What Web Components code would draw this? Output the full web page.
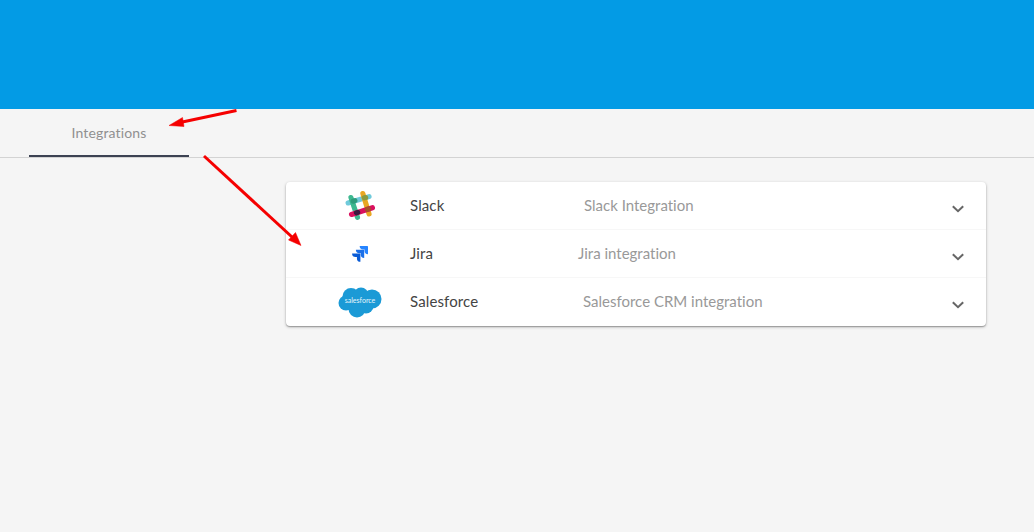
<!DOCTYPE html>
<html>
<head>
<meta charset="utf-8">
<title>Integrations</title>
<style>
    html,body{margin:0;height:100%;}
    body{background:#f5f5f5;font-family:"Lato","Noto Sans",sans-serif;font-variant-ligatures:none;overflow:hidden;position:relative;}
</style>
</head>
<body>
<app-header></app-header>
<tab-bar label="Integrations"></tab-bar>
<integration-list>
    <integration-row name="Slack" desc="Slack Integration" offset="6">
        <svg slot="logo" width="34" height="34" viewBox="0 0 30 30" fill="none" stroke-linecap="round" stroke-width="4.500">
            <path d="M4.500 12.300 23 6.700" stroke="#70cadb"/>
            <path d="M7 7.500 12.800 25" stroke="#3eb890"/>
            <path d="M17.500 4 23 22" stroke="#e8a723"/>
            <path d="M7.500 22.500 26 16.500" stroke="#d9115f"/>
            <path d="M9 10.800 10.500 10.300" stroke="#2f9c7b"/>
            <path d="M18.800 7.800 20 7.500" stroke="#8b9a3f"/>
            <path d="M11.800 21 13 20.600" stroke="#3b1a3f"/>
            <path d="M21.500 17.900 22.500 17.600" stroke="#a5502a"/>
        </svg>
    </integration-row>
    <integration-row name="Jira" desc="Jira integration" offset="0">
        <svg slot="logo" width="16" height="16" viewBox="0 0 24 24">
            <path id="j" d="M23 0H11.500a5.200 5.200 0 0 0 5.200 5.200h2.100v2a5.200 5.200 0 0 0 5.200 5.200V1a1 1 0 0 0-1-1z" fill="#2684ff"/>
            <path d="M17.300 5.700H5.800a5.200 5.200 0 0 0 5.200 5.200h2.100v2a5.200 5.200 0 0 0 5.200 5.200V6.700a1 1 0 0 0-1-1z" fill="#1b6fe8"/>
            <path d="M11.600 11.400H.1a5.200 5.200 0 0 0 5.200 5.200h2.100v2a5.200 5.200 0 0 0 5.200 5.200V12.400a1 1 0 0 0-1-1z" fill="#0a5cd6"/>
        </svg>
    </integration-row>
    <integration-row name="Salesforce" desc="Salesforce CRM integration" offset="5">
        <sf-logo slot="logo"></sf-logo>
    </integration-row>
</integration-list>
<red-arrows></red-arrows>

<script>
class AppHeader extends HTMLElement{
    constructor(){
        super()
        this.attachShadow({mode: 'open'})
        this.shadowRoot.innerHTML = `
            <style>
                :host{display:block;height:109px;background:#039be5;}
            </style>
        `
    }
}

class TabBar extends HTMLElement{
    constructor(){
        super()
        this.attachShadow({mode: 'open'})
        this.shadowRoot.innerHTML = `
            <style>
                :host{display:flex;height:48px;padding-left:29px;border-bottom:1px solid #d3d3d3;}
                #tab{
                    width:160px;
                    display:flex;
                    justify-content:center;
                    align-items:center;
                    box-sizing:border-box;
                    height:48px;
                    padding-top:1px;
                    border-bottom:2px solid #3c4252;
                    font-size:14px;
                    letter-spacing:.15px;
                    color:#909090;
                }
            </style>
            <div id="tab"></div>
        `
    }
    connectedCallback(){
        this.shadowRoot.querySelector('#tab').textContent = this.getAttribute('label')
    }
}

class IntegrationList extends HTMLElement{
    constructor(){
        super()
        this.attachShadow({mode: 'open'})
        this.shadowRoot.innerHTML = `
            <style>
                :host{
                    display:block;
                    width:700px;
                    margin:24px 0 0 286px;
                    background:#fff;
                    border-radius:4px;
                    box-shadow:0 1px 3px rgba(0,0,0,.3),0 1px 1px rgba(0,0,0,.2);
                }
            </style>
            <slot></slot>
        `
    }
}

class IntegrationRow extends HTMLElement{
    constructor(){
        super()
        this.attachShadow({mode: 'open'})
        this.shadowRoot.innerHTML = `
            <style>
                :host{
                    display:flex;
                    align-items:center;
                    height:48px;
                    box-sizing:border-box;
                }
                :host(:not(:last-child)){border-bottom:1px solid #f7f7f7;}
                #logo{width:148px;margin-right:-24px;display:flex;justify-content:center;align-items:center;flex:none;}
                #name,#desc{font-size:15px;margin-bottom:2px;}
                #name{width:168px;flex:none;letter-spacing:.12px;color:#444;}
                #desc{flex:1;color:#999;}
                #arrow{flex:none;margin:6px 20px 0 0;}
            </style>
            <div id="logo"><slot name="logo"></slot></div>
            <div id="name"></div>
            <div id="desc"></div>
            <svg id="arrow" width="16" height="16" viewBox="0 0 16 16" fill="none">
                <path d="M2.800 5.200 8 10.200l5.200-5" stroke="#666" stroke-width="2"/>
            </svg>
        `
    }
    connectedCallback(){
        this.shadowRoot.querySelector('#name').textContent = this.getAttribute('name')
        const desc = this.shadowRoot.querySelector('#desc')
        desc.textContent = this.getAttribute('desc')
        desc.style.paddingLeft = this.getAttribute('offset') + 'px'
    }
}

class SfLogo extends HTMLElement{
    constructor(){
        super()
        this.attachShadow({mode: 'open'})
        this.shadowRoot.innerHTML = `
            <style>
                :host{display:block;width:44px;height:31px;}
                svg{display:block;}
                text{font-family:"Lato",sans-serif;font-size:7px;fill:#e8f5fb;}
            </style>
            <svg width="44" height="31" viewBox="0 0 44 31" fill="#1b9ad6">
                <circle cx="13" cy="9.500" r="8.500"/>
                <circle cx="23" cy="8" r="7.500"/>
                <circle cx="34" cy="12" r="9.500"/>
                <circle cx="28" cy="19" r="7.500"/>
                <circle cx="19" cy="22" r="8.500"/>
                <circle cx="8" cy="16" r="7.500"/>
                <text x="22" y="16" text-anchor="middle">salesforce</text>
            </svg>
        `
    }
}

class RedArrows extends HTMLElement{
    constructor(){
        super()
        this.attachShadow({mode: 'open'})
        this.shadowRoot.innerHTML = `
            <style>
                :host{position:absolute;left:0;top:0;width:1034px;height:532px;pointer-events:none;}
            </style>
            <svg width="1034" height="532" viewBox="0 0 1034 532" fill="#f50000" stroke="#f50000">
                <path d="M236.500 110.500 180 122.500" stroke-width="3"/>
                <path d="M169 125.500 182.500 117.500 184 126.500z" stroke-width=".5"/>
                <path d="M204 156 292 237" stroke-width="3"/>
                <path d="M301 245.500 288.500 240 295.500 232.500z" stroke-width=".5"/>
            </svg>
        `
    }
}

customElements.define('app-header', AppHeader)
customElements.define('tab-bar', TabBar)
customElements.define('integration-list', IntegrationList)
customElements.define('integration-row', IntegrationRow)
customElements.define('sf-logo', SfLogo)
customElements.define('red-arrows', RedArrows)
</script>
</body>
</html>
